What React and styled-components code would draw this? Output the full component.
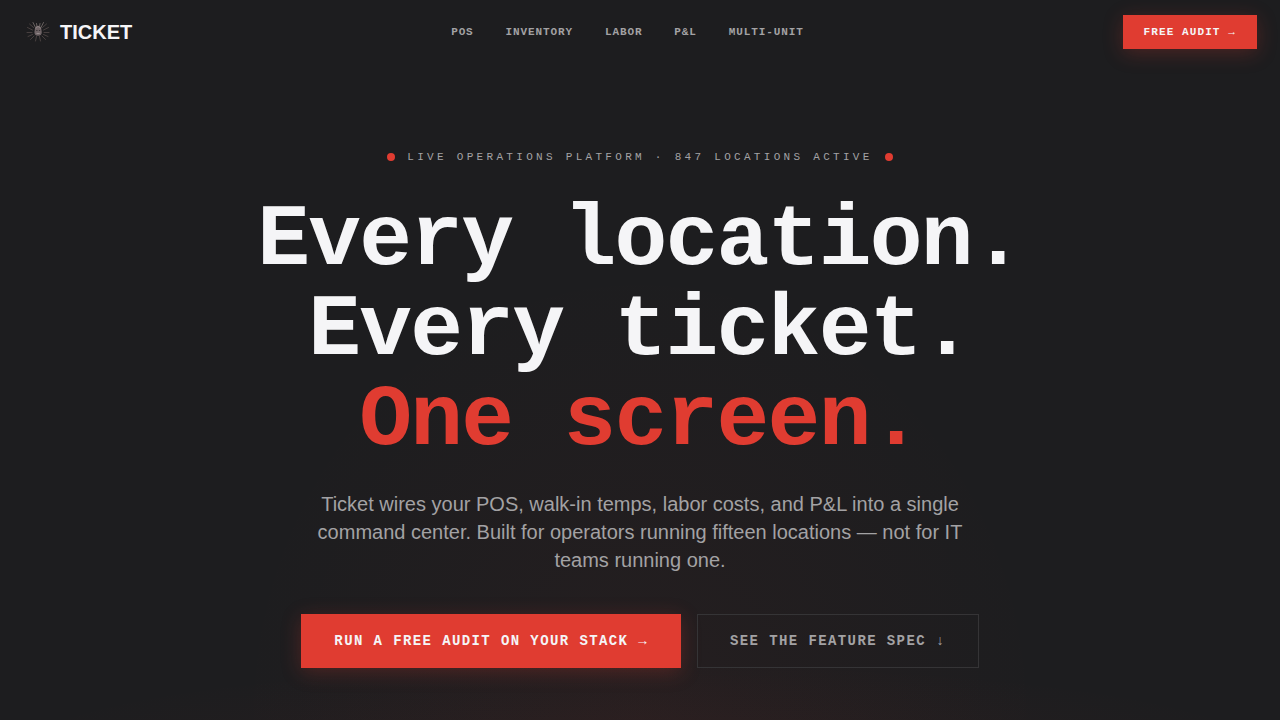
import React from 'react';
import styled, { createGlobalStyle } from 'styled-components';

const GlobalStyle = createGlobalStyle`
    * {
        box-sizing: border-box;
    }

    body {
        margin: 0;
        background: #1d1d1f;
        color: #f5f5f7;
        font-family: "Liberation Sans", Arial, sans-serif;
    }
`

const mono = '"Liberation Mono", "Courier New", monospace';

const Page = styled.div`
    min-height: 100vh;
    background:
        radial-gradient(ellipse 50% 12% at 50% 104%, rgba(224, 60, 49, 0.05), transparent),
        radial-gradient(ellipse 32% 64% at 50% 100%, rgba(224, 60, 49, 0.04), transparent),
        #1d1d1f;
`

const Header = styled.header`
    display: flex;
    align-items: center;
    justify-content: space-between;
    height: 64px;
    padding: 0 23px 0 24px;
`

const Brand = styled.a`
    display: flex;
    align-items: center;
    gap: 8px;
    color: #f5f5f7;
    font-size: 20px;
    font-weight: 700;
    line-height: 24px;
    text-decoration: none;
`

const Nav = styled.nav`
    display: flex;
    gap: 32px;
`

const NavLink = styled.a`
    color: #a3a2a4;
    font-family: ${mono};
    font-size: 11px;
    font-weight: 700;
    line-height: 12px;
    letter-spacing: 0.08em;
    text-decoration: none;
`

const Button = styled.button`
    padding: ${props => props.$small ? "10px 20px" : "18px 32px"};
    border: 1px solid ${props => props.$ghost ? "#353436" : "#e03c31"};
    border-radius: 0;
    background: ${props => props.$ghost ? "transparent" : "#e03c31"};
    color: ${props => props.$ghost ? "#a3a2a4" : "#f5f5f7"};
    box-shadow: ${props => props.$ghost ? "none" : "0 4px 20px rgba(224, 60, 49, 0.25)"};
    font-family: ${mono};
    font-size: ${props => props.$small ? "11px" : "14px"};
    font-weight: 700;
    line-height: ${props => props.$small ? "12px" : "16px"};
    letter-spacing: 0.1em;
    white-space: nowrap;
    cursor: pointer;
`

const Hero = styled.main`
    display: flex;
    flex-direction: column;
    align-items: center;
    padding: 86px 24px 48px;
    text-align: center;
`

const Eyebrow = styled.div`
    display: flex;
    align-items: center;
    gap: 12px;
    margin-bottom: 32px;
    color: #a3a2a4;
    font-family: ${mono};
    font-size: 11px;
    line-height: 14px;
    letter-spacing: 0.3em;
`

const Dot = styled.span`
    width: 8px;
    height: 8px;
    border-radius: 50%;
    background: #e03c31;
`

const Title = styled.h1`
    margin: 0 0 24px;
    font-family: ${mono};
    font-size: 88px;
    font-weight: 700;
    line-height: 90px;
    letter-spacing: -0.02em;
`

const Accent = styled.span`
    color: #e03c31;
`

const Lead = styled.p`
    max-width: 680px;
    margin: 0 0 40px;
    color: #a3a2a4;
    font-size: 20px;
    line-height: 28px;
`

const Actions = styled.div`
    display: flex;
    flex-wrap: wrap;
    justify-content: center;
    gap: 16px;
`

const links = ['POS', 'INVENTORY', 'LABOR', 'P&L', 'MULTI-UNIT'];

const Logo = () => (
    <svg width="28" height="28" viewBox="0 0 28 28" fill="none" aria-hidden="true">
        <g stroke="#7c6a67" strokeWidth="0.9" strokeLinecap="round" opacity="0.5">
            <path d="M8.5 12 3.500 9.500M8 14.500H3M8.500 16.500 4 18.500M10 18 6.500 21.500M19.500 12l5-2.500M20 14.500h5M19.500 16.500l4.500 2M18 18l3.500 3.500M12.500 18.500 11.500 23M15.500 18.500l1 4.500M9.500 9.500 5.500 6M18.500 9.500l4-3.500" />
        </g>
        <g stroke="#8e8280" strokeWidth="1" strokeLinecap="round" opacity="0.65">
            <path d="M11.500 9.500 9 4.500M13 8.500l-.5-3M15.500 8.500l.5-3M17 9.500l2.500-5" />
        </g>
        <path d="M10.800 11.500c0-2.300 1.400-3.700 3.300-3.700s3.300 1.400 3.300 3.700l.4 2.700c0 2.300-1.500 3.600-3.700 3.600s-3.700-1.300-3.700-3.600z" fill="#6f6466" />
        <path d="M11.800 10.500c.5-1.200 1.300-1.800 2.300-1.800s1.800.6 2.300 1.800" stroke="#958b8c" strokeWidth="1" />
        <path d="M12.200 12.500h1.300M14.900 12.500h1.300" stroke="#3a3437" strokeWidth="1" />
        <path d="M12.500 15.500h3.200" stroke="#958b8c" strokeWidth="1" />
    </svg>
)

const App = () => {
    return (
        <Page>
            <GlobalStyle />
            <Header>
                <Brand href="#top">
                    <Logo />
                    TICKET
                </Brand>
                <Nav>
                    {links.map(link => (
                        <NavLink key={link} href="#features">{link}</NavLink>
                    ))}
                </Nav>
                <Button $small>FREE AUDIT →</Button>
            </Header>

            <Hero>
                <Eyebrow>
                    <Dot />
                    <span>LIVE OPERATIONS PLATFORM · 847 LOCATIONS ACTIVE</span>
                    <Dot />
                </Eyebrow>
                <Title>
                    Every location.<br />
                    Every ticket.<br />
                    <Accent>One screen.</Accent>
                </Title>
                <Lead>
                    Ticket wires your POS, walk-in temps, labor costs, and P&amp;L into a single
                    command center. Built for operators running fifteen locations — not for IT
                    teams running one.
                </Lead>
                <Actions>
                    <Button>RUN A FREE AUDIT ON YOUR STACK →</Button>
                    <Button $ghost>SEE THE FEATURE SPEC ↓</Button>
                </Actions>
            </Hero>
        </Page>
    )
}

export default App;
